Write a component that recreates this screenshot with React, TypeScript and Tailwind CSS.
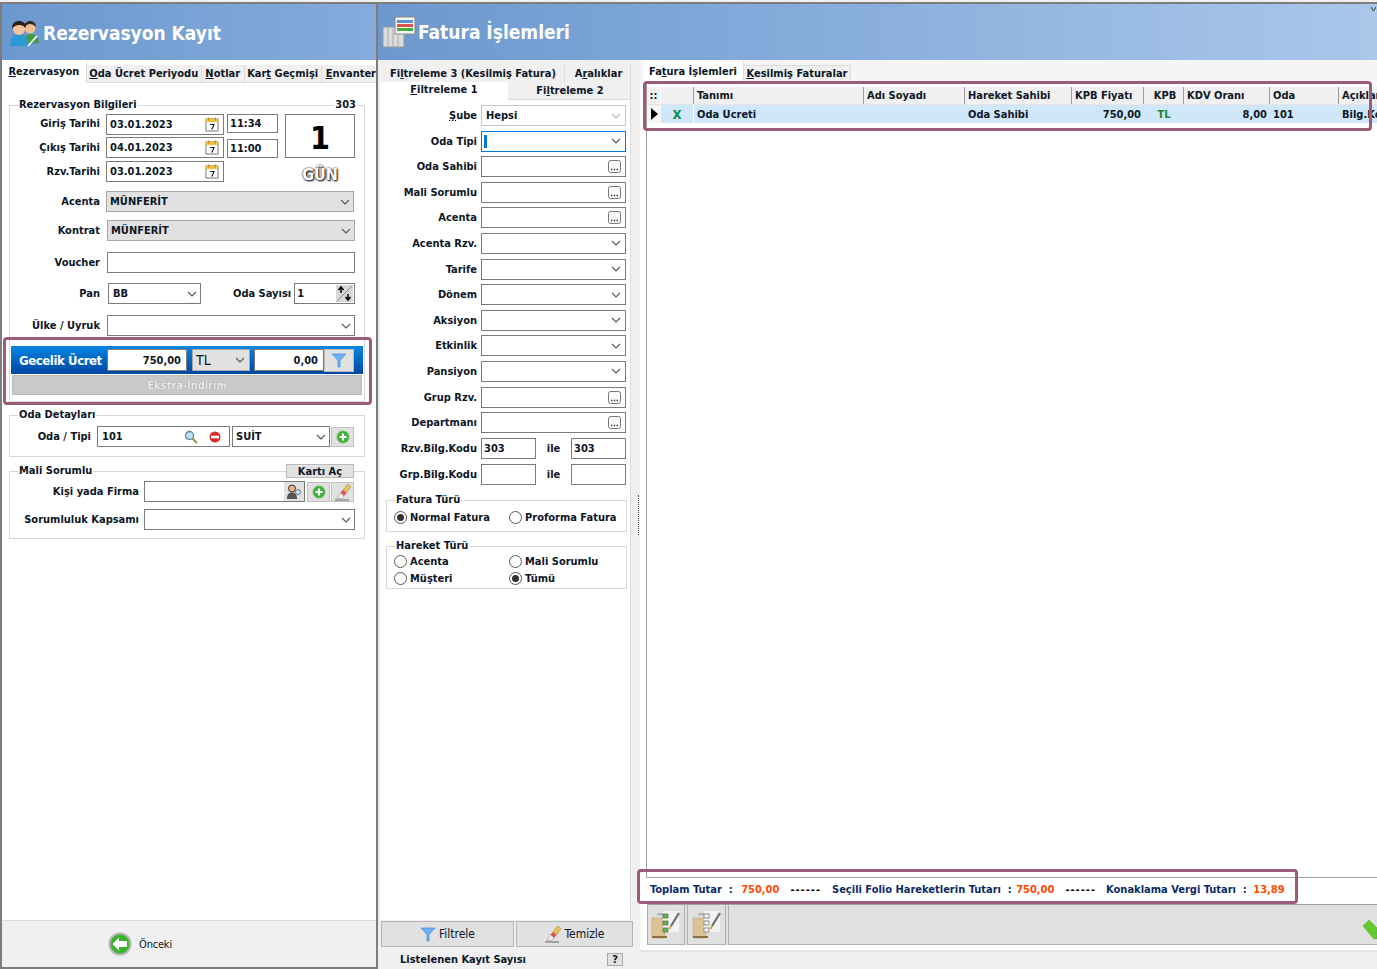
import type { ReactNode } from 'react'

function Chevron({ light }: { light?: boolean }) {
  return (
    <svg width="10" height="6" viewBox="0 0 10 6" className="shrink-0" fill="none" stroke={light ? '#b5b5b5' : '#555'} strokeWidth="1.1">
      <path d="M1 1l4 4 4-4" />
    </svg>
  )
}

function Calendar() {
  return (
    <svg width="14" height="15" viewBox="0 0 14 15" className="shrink-0">
      <rect x="1" y="2" width="12" height="12" fill="#fff" stroke="#777" />
      <rect x="1" y="2" width="12" height="3" fill="#f2c230" />
      <rect x="3" y="0.5" width="1.5" height="3" fill="#c99a10" />
      <rect x="9.5" y="0.5" width="1.5" height="3" fill="#c99a10" />
      <path d="M5 7.5h4L6.8 12.5" stroke="#222" strokeWidth="1.2" fill="none" />
    </svg>
  )
}

function Funnel({ size = 16 }: { size?: number }) {
  return (
    <svg width={size} height={size} viewBox="0 0 16 16" className="shrink-0">
      <path d="M1 2h14L9 8.500V15H7V8.500z" fill="#6db2f5" stroke="#3d8be0" strokeWidth="0.7" />
    </svg>
  )
}

function PlusIcon() {
  return (
    <svg width="14" height="14" viewBox="0 0 14 14">
      <circle cx="7" cy="7" r="6.4" fill="#3fae3a" stroke="#b8d8b5" />
      <path d="M7 3.5v7M3.5 7h7" stroke="#fff" strokeWidth="2.2" />
    </svg>
  )
}

function Brush({ size = 18 }: { size?: number }) {
  return (
    <svg width={size} height={size} viewBox="0 0 18 18">
      <path d="M9 7l4.500-6L17 3.500 12.500 10z" fill="#eabf62" stroke="#9a7a30" strokeWidth="0.5" />
      <path d="M6.500 9.500L9 7l3.500 3-2.500 3z" fill="#d9534f" />
      <path d="M6.500 9.500l3.500 3.500-2 2.500H3z" fill="#eeeeee" stroke="#888" strokeWidth="0.5" />
      <path d="M1 17h14" stroke="#666" />
    </svg>
  )
}

function Dots() {
  return (
    <svg width="13" height="13" viewBox="0 0 13 13" className="shrink-0">
      <rect x="0.500" y="0.500" width="12" height="12" rx="2" fill="#fafafa" stroke="#777" />
      <path d="M3 9.500h1.400M5.800 9.500h1.400M8.600 9.500H10" stroke="#333" strokeWidth="1.300" />
    </svg>
  )
}

function Clipboard({ checked }: { checked?: boolean }) {
  const box = checked ? '#58b83f' : '#f8f8f8'
  return (
    <svg width="30" height="29" viewBox="0 0 30 29">
      <path d="M1 8h13v20H1z" fill="#dcc394" stroke="#b59c68" strokeWidth="0.5" />
      <rect x="1" y="26" width="15" height="2" fill="#8b7040" />
      <rect x="12" y="1" width="16" height="21" fill="#f2f2f2" />
      <rect x="6" y="3" width="6" height="2.500" fill="#b5b5b5" />
      <rect x="12" y="4" width="5" height="4" fill={box} stroke="#666" strokeWidth="0.7" />
      <rect x="12" y="11" width="5" height="4" fill={box} stroke="#666" strokeWidth="0.7" />
      <rect x="12" y="18" width="5" height="4" fill={box} stroke="#666" strokeWidth="0.7" />
      <path d="M28 3L20 16" stroke="#6d6d6d" strokeWidth="2.200" />
      <path d="M20 16l-1.500 3" stroke="#c9a450" strokeWidth="2" />
    </svg>
  )
}

function Box({ className, children }: { className: string; children?: ReactNode }) {
  return <div className={`flex items-center bg-white border border-[#7a7a7a] ${className}`}>{children}</div>
}

function Label({ className, children }: { className: string; children: ReactNode }) {
  return <span className={`shrink-0 text-right whitespace-nowrap ${className}`}>{children}</span>
}

function Tab({ className, children }: { className: string; children: ReactNode }) {
  return <div className={`flex items-center justify-center whitespace-nowrap border-[#dcdcdc] ${className}`}>{children}</div>
}

function Radio({ on, children, className }: { on?: boolean; children: string; className?: string }) {
  return (
    <div className={`flex items-center gap-[3px] ${className ?? ''}`}>
      <span className="flex h-[13px] w-[13px] items-center justify-center rounded-full border border-[#555] bg-white">
        {on && <span className="h-[7px] w-[7px] rounded-full bg-[#333]" />}
      </span>
      {children}
    </div>
  )
}

type FilterKind = 'select' | 'dots'

const filters: { label: ReactNode; kind: FilterKind }[] = [
  { label: 'Oda Sahibi', kind: 'dots' },
  { label: 'Mali Sorumlu', kind: 'dots' },
  { label: 'Acenta', kind: 'dots' },
  { label: 'Acenta Rzv.', kind: 'select' },
  { label: 'Tarife', kind: 'select' },
  { label: 'Dönem', kind: 'select' },
  { label: 'Aksiyon', kind: 'select' },
  { label: 'Etkinlik', kind: 'select' },
  { label: 'Pansiyon', kind: 'select' },
  { label: 'Grup Rzv.', kind: 'dots' },
  { label: 'Departmanı', kind: 'dots' },
]

const columns = [
  { title: 'Tanımı', value: 'Oda Ücreti', cls: 'w-[170px] text-left' },
  { title: 'Adı Soyadı', value: '', cls: 'w-[101px] text-left' },
  { title: 'Hareket Sahibi', value: 'Oda Sahibi', cls: 'w-[107px] text-left' },
  { title: 'KPB Fiyatı', value: '750,00', cls: 'w-[72px] text-right', headLeft: true },
  { title: 'KPB', value: 'TL', cls: 'w-[40px] text-center text-[#1a8a2a]', headCenter: true },
  { title: 'KDV Oranı', value: '8,00', cls: 'w-[86px] text-right', headLeft: true },
  { title: 'Oda', value: '101', cls: 'w-[69px] text-left' },
  { title: 'Açıklama', value: 'Bilg.Kodu', cls: 'w-[60px] text-left' },
]

export default function App() {
  return (
    <div className="relative flex h-[969px] w-[1377px] overflow-hidden bg-[#f0f0f0] pt-[2px] font-['DejaVu_Sans_Condensed','DejaVu_Sans',sans-serif] text-[11px] font-bold leading-none text-[#0d1626]">
      {/* sol panel */}
      <div className="flex h-[967px] w-[378px] shrink-0 flex-col border-2 border-[#7d7d7d] bg-white">
        <div className="flex h-[56px] shrink-0 items-center gap-[3px] bg-gradient-to-r from-[#6b98cf] to-[#86abdc] pl-[6px] pt-[2px]">
          <svg width="32" height="27" viewBox="0 0 32 27">
            <path d="M15 24c0-7 3-10 7-10s9 2 9 9z" fill="#3f9a4c" />
            <circle cx="22" cy="8" r="5.500" fill="#f0bd95" />
            <path d="M16 8c0-5 3-7 6-7s6 2 6 6c-2-2-4-3-6-3s-4 1-6 4z" fill="#2a2a20" />
            <path d="M2 26c0-8 3-12 9-12s9 4 9 12z" fill="#2c9ad6" />
            <circle cx="11" cy="9" r="6" fill="#f4c29b" />
            <path d="M4 9c0-6 3-8 7-8s7 2 7 7c-2-2-4-3-7-3S6 6 4 9z" fill="#2b2118" />
            <path d="M20 26l9-10" stroke="#fff" strokeWidth="1.600" />
          </svg>
          <span className="text-[19px] text-white">Rezervasyon Kayıt</span>
        </div>

        <div className="flex h-[23px] shrink-0 items-end overflow-hidden bg-white">
          <Tab className="h-[22px] w-[87px] border-r bg-white"><span className="-mt-[2px]"><u>R</u>ezervasyon</span></Tab>
          <Tab className="h-[18px] w-[118px] border-r border-b bg-[#f0f0f0]"><span><u>O</u>da Ücret Periyodu</span></Tab>
          <Tab className="h-[18px] w-[44px] border-r border-b bg-[#f0f0f0]"><span><u>N</u>otlar</span></Tab>
          <Tab className="h-[18px] w-[79px] border-r border-b bg-[#f0f0f0]"><span>Kar<u>t</u> Geçmişi</span></Tab>
          <Tab className="h-[18px] flex-1 justify-start border-b bg-[#f0f0f0] pl-[4px]"><span><u>E</u>nvanter</span></Tab>
        </div>

        <div className="flex min-h-0 flex-1 flex-col pl-[7px] pt-[15px]">
          <fieldset className="relative h-[304px] w-[356px] border border-[#d8d8d8]">
            <legend className="ml-[8px] h-[14px] px-[1px] leading-[14px]">Rezervasyon Bilgileri</legend>
            <span className="absolute right-[7px] top-[-14px] bg-white px-[1px] leading-[14px]">303</span>

            <div className="mt-[2px] flex">
              <div className="flex w-[269px] flex-col gap-[2px]">
                <div className="flex h-[21px] items-start">
                  <Label className="mr-[6px] mt-[4px] w-[90px]">Giriş Tarihi</Label>
                  <Box className="h-[21px] w-[118px] justify-between pl-[3px] pr-[4px]">03.01.2023<Calendar /></Box>
                  <Box className="ml-[3px] h-[19px] w-[51px] pl-[2px]">11:34</Box>
                </div>
                <div className="flex h-[21px] items-start">
                  <Label className="mr-[6px] mt-[5px] w-[90px]">Çıkış Tarihi</Label>
                  <Box className="h-[21px] w-[118px] justify-between pl-[3px] pr-[4px]">04.01.2023<Calendar /></Box>
                  <Box className="ml-[3px] mt-[2px] h-[19px] w-[51px] pl-[2px]">11:00</Box>
                </div>
                <div className="mt-[1px] flex h-[21px] items-center">
                  <Label className="mr-[6px] w-[90px]">Rzv.Tarihi</Label>
                  <Box className="h-[21px] w-[118px] justify-between pl-[3px] pr-[4px]">03.01.2023<Calendar /></Box>
                </div>
              </div>
              <div className="ml-[6px] flex w-[70px] flex-col items-center">
                <div className="flex h-[44px] w-[70px] items-center justify-center border border-[#7a7a7a] pt-[3px] text-[32px] text-black">1</div>
                <span className="mt-[9px] text-[16px] text-white [text-shadow:0_0_2px_#000,1px_1px_2px_#000]">GÜN</span>
              </div>
            </div>

            <div className="mt-[8px] flex h-[21px] items-center">
              <Label className="mr-[6px] w-[90px]">Acenta</Label>
              <div className="flex h-[21px] w-[248px] items-center justify-between border border-[#a6a6a6] bg-[#e1e1e1] pl-[3px] pr-[3px]">MÜNFERİT<Chevron /></div>
            </div>
            <div className="mt-[8px] flex h-[21px] items-center">
              <Label className="mr-[7px] w-[90px]">Kontrat</Label>
              <div className="flex h-[21px] w-[248px] items-center justify-between border border-[#a6a6a6] bg-[#e1e1e1] pl-[3px] pr-[3px]">MÜNFERİT<Chevron /></div>
            </div>
            <div className="mt-[11px] flex h-[21px] items-center">
              <Label className="mr-[7px] w-[90px]">Voucher</Label>
              <Box className="h-[21px] w-[248px]" />
            </div>
            <div className="mt-[10px] flex h-[21px] items-center">
              <Label className="mr-[8px] w-[90px]">Pan</Label>
              <Box className="h-[21px] w-[93px] justify-between pl-[4px] pr-[3px]">BB<Chevron /></Box>
              <Label className="ml-[32px] mr-[3px]">Oda Sayısı</Label>
              <Box className="h-[21px] w-[61px] justify-between pl-[2px] pr-[1px]">
                1
                <svg width="17" height="17" viewBox="0 0 17 17">
                  <rect width="17" height="17" fill="#d8d8d8" />
                  <path d="M1 16L16 1" stroke="#888" />
                  <path d="M5 8V3M2.500 5L5 2l2.500 3M12 9v5M9.500 12l2.500 3 2.500-3" stroke="#000" strokeWidth="1.500" fill="none" />
                </svg>
              </Box>
            </div>
            <div className="mt-[11px] flex h-[21px] items-center">
              <Label className="mr-[7px] w-[90px]">Ülke / Uyruk</Label>
              <Box className="h-[21px] w-[248px] justify-end pr-[3px]"><Chevron /></Box>
            </div>

            <div className="ml-[1px] mt-[10px] flex h-[28px] w-[352px] items-center bg-gradient-to-b from-[#0b86e2] to-[#0047a3] pl-[8px]">
              <span className="w-[88px] whitespace-nowrap text-[13px] tracking-[-0.4px] text-white">Gecelik Ücret</span>
              <Box className="h-[22px] w-[80px] justify-end pr-[5px]">750,00</Box>
              <div className="ml-[5px] flex h-[22px] w-[58px] items-center justify-between border border-[#a6a6a6] bg-[#e1e1e1] pl-[3px] pr-[4px] text-[14px] font-normal">TL<Chevron /></div>
              <Box className="ml-[4px] h-[22px] w-[70px] justify-end pr-[5px]">0,00</Box>
              <div className="flex h-[23px] w-[30px] items-center justify-center border border-[#bbb] bg-[#e1e1e1]"><Funnel /></div>
            </div>
            <div className="ml-[2px] mt-[1px] flex h-[20px] w-[350px] items-center justify-center border border-[#bdbdbd] bg-[#c9c9c9] text-[#ececec] [text-shadow:0_0_1px_#777]">Ekstra-İndirim</div>
          </fieldset>

          <fieldset className="mt-[6px] h-[49px] w-[356px] border border-[#d8d8d8]">
            <legend className="ml-[8px] h-[14px] px-[1px] leading-[14px]">Oda Detayları</legend>
            <div className="mt-[4px] flex items-center">
              <Label className="mr-[6px] w-[81px]">Oda / Tipi</Label>
              <Box className="h-[21px] w-[133px] pl-[4px]">
                <span className="flex-1">101</span>
                <svg width="14" height="14" viewBox="0 0 14 14">
                  <circle cx="5.500" cy="5.500" r="4" fill="#bfe0f2" stroke="#5b8aa5" strokeWidth="1.300" />
                  <path d="M8.500 8.500L13 13" stroke="#a08850" strokeWidth="2" />
                </svg>
                <svg width="12" height="12" viewBox="0 0 12 12" className="ml-[11px] mr-[8px]">
                  <circle cx="6" cy="6" r="5.500" fill="#d92b2b" />
                  <rect x="2" y="4.700" width="8" height="2.600" fill="#fff" />
                </svg>
              </Box>
              <Box className="ml-[2px] h-[21px] w-[98px] justify-between pl-[3px] pr-[3px]">SUİT<Chevron /></Box>
              <div className="ml-[1px] flex h-[20px] w-[23px] items-center justify-center border border-[#c0c0c0] bg-[#e1e1e1]"><PlusIcon /></div>
            </div>
          </fieldset>

          <fieldset className="relative mt-[7px] h-[75px] w-[356px] border border-[#d8d8d8]">
            <legend className="ml-[8px] h-[14px] px-[1px] leading-[14px]">Mali Sorumlu</legend>
            <div className="absolute right-[10px] top-[-14px] flex h-[14px] w-[68px] items-center justify-center border border-[#bbb] bg-[#e1e1e1]">Kartı Aç</div>
            <div className="mt-[3px] flex items-center">
              <Label className="mr-[5px] w-[129px]">Kişi yada Firma</Label>
              <Box className="h-[21px] w-[161px] justify-end">
                <div className="flex h-[19px] w-[20px] items-center justify-center bg-[#e1e1e1]">
                  <svg width="16" height="16" viewBox="0 0 16 16">
                    <circle cx="6" cy="4.500" r="3.500" fill="#e8b48c" stroke="#333" />
                    <path d="M1 15c0-5 2-6.500 5-6.500s5 1.500 5 6.500z" fill="#555" />
                    <circle cx="12" cy="8" r="2.500" fill="#cfe6f5" stroke="#678" />
                  </svg>
                </div>
              </Box>
              <div className="ml-[2px] flex h-[20px] w-[23px] items-center justify-center border border-[#c0c0c0] bg-[#e1e1e1]"><PlusIcon /></div>
              <div className="ml-[1px] flex h-[20px] w-[23px] items-center justify-center border border-[#c0c0c0] bg-[#e1e1e1]"><Brush /></div>
            </div>
            <div className="mt-[7px] flex items-center">
              <Label className="mr-[5px] w-[129px]">Sorumluluk Kapsamı</Label>
              <Box className="h-[21px] w-[211px] justify-end pr-[3px]"><Chevron /></Box>
            </div>
          </fieldset>
        </div>

        <div className="flex h-[47px] shrink-0 items-center justify-center gap-[7px] border-t border-[#dcdcdc] bg-[#f0f0f0] pr-[98px] text-[11px] font-normal tracking-[-0.2px]">
          <svg width="24" height="24" viewBox="0 0 24 24">
            <circle cx="12" cy="12" r="11.500" fill="#b5b5b5" />
            <circle cx="12" cy="12" r="9.500" fill="#37b52f" />
            <path d="M11 5.500L4.500 12l6.500 6.500V15h8V9h-8z" fill="#fff" />
          </svg>
          Önceki
        </div>
      </div>

      {/* sağ panel */}
      <div className="flex h-[967px] min-w-0 flex-1 flex-col">
        <div className="flex h-[58px] shrink-0 items-center gap-[2px] border-t-2 border-[#7d7d7d] bg-gradient-to-r from-[#6b98cf] to-[#aac7ea] pl-[4px]">
          <svg width="34" height="32" viewBox="0 0 34 32">
            <path d="M1 11h21v20H1z" fill="#dcdcdc" stroke="#999" />
            <path d="M6 11v20M11 11v20M16 11v20" stroke="#aaa" />
            <rect x="13" y="1" width="20" height="17" fill="#f5f5f5" stroke="#888" />
            <rect x="15" y="4" width="16" height="3" fill="#5b8fd6" />
            <rect x="15" y="8" width="16" height="3" fill="#d9534f" />
            <rect x="15" y="12" width="16" height="3" fill="#3fae3a" />
          </svg>
          <span className="text-[19px] text-white">Fatura İşlemleri</span>
          <svg width="5" height="5" viewBox="0 0 5 5" className="mb-[46px] ml-auto mr-[1px]"><path d="M0 0l2.500 4L5 0" stroke="#333" fill="none" /></svg>
        </div>

        <div className="flex min-h-0 flex-1">
          {/* filtre kolonu */}
          <div className="flex w-[258px] shrink-0 flex-col pl-[2px]">
            <div className="mt-[4px] flex h-[18px] w-[251px] shrink-0">
              <Tab className="w-[185px] border-r bg-[#f0f0f0]"><span className="ml-[2px]">Fi<u>l</u>treleme 3 (Kesilmiş Fatura)</span></Tab>
              <Tab className="flex-1 border-r bg-[#f0f0f0]"><span className="ml-[2px]">A<u>r</u>alıklar</span></Tab>
            </div>
            <div className="flex h-[18px] w-[251px] shrink-0 bg-[#f0f0f0]">
              <Tab className="w-[128px] bg-white"><span className="-mt-[3px]"><u>F</u>iltreleme 1</span></Tab>
              <Tab className="flex-1 border-r border-b"><span className="ml-[2px]">Fi<u>l</u>treleme 2</span></Tab>
            </div>
            <div className="flex min-h-0 w-[251px] flex-1 flex-col border-r border-[#dcdcdc] bg-white">
              <div className="mt-[5px] flex flex-col gap-[4.600px] pr-[4px]">
                <div className="flex h-[21px] items-center justify-end">
                  <Label className="mr-[4px]"><u>Ş</u>ube</Label>
                  <div className="flex h-[21px] w-[145px] items-center justify-between border border-[#c8c8c8] pl-[4px] pr-[4px]">Hepsi<Chevron light /></div>
                </div>
                <div className="flex h-[21px] items-center justify-end">
                  <Label className="mr-[4px]">Oda Tipi</Label>
                  <div className="flex h-[21px] w-[145px] items-center justify-between border border-[#0078d7] pl-[2px] pr-[4px]">
                    <span className="h-[13px] w-[3px] bg-[#0078d7]" />
                    <Chevron />
                  </div>
                </div>
                {filters.map((f, i) => (
                  <div key={i} className="flex h-[21px] items-center justify-end">
                    <Label className="mr-[4px]">{f.label}</Label>
                    <Box className="h-[21px] w-[145px] justify-end pr-[4px]">{f.kind === 'select' ? <Chevron /> : <Dots />}</Box>
                  </div>
                ))}
                <div className="flex h-[21px] items-center justify-end">
                  <Label className="mr-[4px]">Rzv.Bilg.Kodu</Label>
                  <Box className="h-[21px] w-[55px] pl-[2px]">303</Box>
                  <span className="w-[35px] text-center">ile</span>
                  <Box className="h-[21px] w-[55px] pl-[2px]">303</Box>
                </div>
                <div className="mt-[1px] flex h-[21px] items-center justify-end">
                  <Label className="mr-[4px]">Grp.Bilg.Kodu</Label>
                  <Box className="h-[21px] w-[55px]" />
                  <span className="w-[35px] text-center">ile</span>
                  <Box className="h-[21px] w-[55px]" />
                </div>
              </div>

              <fieldset className="ml-[6px] mt-[8px] h-[39px] w-[241px] border border-[#d8d8d8]">
                <legend className="ml-[8px] h-[14px] px-[1px] leading-[14px]">Fatura Türü</legend>
                <div className="mt-[4px] flex pl-[7px]">
                  <Radio on className="w-[115px]">Normal Fatura</Radio>
                  <Radio>Proforma Fatura</Radio>
                </div>
              </fieldset>
              <fieldset className="ml-[6px] mt-[7px] h-[50px] w-[241px] border border-[#d8d8d8]">
                <legend className="ml-[8px] h-[14px] px-[1px] leading-[14px]">Hareket Türü</legend>
                <div className="mt-[2px] grid grid-cols-[115px_1fr] gap-y-[4px] pl-[7px]">
                  <Radio>Acenta</Radio>
                  <Radio>Mali Sorumlu</Radio>
                  <Radio>Müşteri</Radio>
                  <Radio on>Tümü</Radio>
                </div>
              </fieldset>
            </div>
            <div className="mb-[1px] flex h-[28px] w-[254px] shrink-0 items-center gap-[2px] pl-[1px] text-[12px] font-normal">
              <div className="flex h-[26px] w-[133px] items-center justify-center gap-[3px] border border-[#b5b5b5] bg-[#e1e1e1]"><Funnel />Filtrele</div>
              <div className="flex h-[26px] w-[117px] items-center justify-center gap-[2px] border border-[#b5b5b5] bg-[#e1e1e1]"><Brush />Temizle</div>
            </div>
            <div className="flex h-[20px] shrink-0 items-center pl-[20px]">
              <span className="w-[207px]">Listelenen Kayıt Sayısı</span>
              <div className="flex h-[13px] w-[16px] items-center justify-center border border-[#aaa] bg-[#e1e1e1]">?</div>
            </div>
          </div>

          {/* ayırıcı */}
          <div className="flex w-[4px] shrink-0 items-center justify-center">
            <div className="h-[40px] w-[1px] border-l border-dotted border-[#555]" />
          </div>

          {/* fatura listesi */}
          <div className="flex min-w-0 flex-1 flex-col overflow-hidden bg-white">
            <div className="flex h-[21px] shrink-0 items-end bg-[#f5f5f5] pl-[3px]">
              <Tab className="h-[20px] w-[101px] border-r bg-white"><span>Fa<u>t</u>ura İşlemleri</span></Tab>
              <Tab className="h-[16px] w-[107px] border-r border-t bg-[#f0f0f0]"><span><u>K</u>esilmiş Faturalar</span></Tab>
            </div>
            <div className="ml-[6px] flex min-h-0 flex-1 flex-col border-b border-l border-[#a0a0a0] pt-[6px]">
              <div className="flex h-[18px] shrink-0 border-b border-[#e6e6e6] bg-[#f0f0f0]">
                <div className="flex w-[14px] shrink-0 items-center justify-center border-r border-white">::</div>
                <div className="w-[33px] shrink-0 border-r border-[#9a9a9a]" />
                {columns.map((c) => (
                  <div
                    key={c.title}
                    className={`flex shrink-0 items-center overflow-hidden whitespace-nowrap border-r border-[#9a9a9a] pl-[3px] ${c.cls.split(' ')[0]} ${c.headCenter ? 'justify-center pl-0' : ''}`}
                  >
                    {c.title}
                  </div>
                ))}
              </div>
              <div className="flex h-[18px] shrink-0 bg-[#cfe6fb]">
                <div className="flex w-[14px] shrink-0 items-center justify-center bg-[#f5f5f5]">
                  <svg width="7" height="12" viewBox="0 0 7 12"><path d="M0 0l7 6-7 6z" fill="#000" /></svg>
                </div>
                <div className="flex w-[33px] shrink-0 items-center justify-center border-r border-white text-[13px] text-[#0a8a4a]">X</div>
                {columns.map((c) => (
                  <div key={c.title} className={`shrink-0 self-center overflow-hidden whitespace-nowrap px-[3px] ${c.cls}`}>
                    {c.value}
                  </div>
                ))}
              </div>
            </div>
            <div className="flex h-[26px] shrink-0 items-center pb-[4px] pl-[10px] text-[#0a2a66]">
              <span>Toplam Tutar&nbsp; :&nbsp;</span>
              <span className="ml-[5px] text-[#ff4a00]">750,00</span>
              <span className="ml-[11px] tracking-[1px] text-black">------</span>
              <span className="ml-[11px]">Seçili Folio Hareketlerin Tutarı&nbsp; :&nbsp;</span>
              <span className="ml-[1px] text-[#ff4a00]">750,00</span>
              <span className="ml-[11px] tracking-[1px] text-black">------</span>
              <span className="ml-[10px]">Konaklama Vergi Tutarı&nbsp; :&nbsp;</span>
              <span className="ml-[3px] text-[#ff4a00]">13,89</span>
            </div>
            <div className="ml-[7px] flex h-[41px] shrink-0 gap-[2px] border-t border-[#a0a0a0] bg-[#e0e0e0]">
              <div className="flex h-[40px] w-[38px] items-center justify-center border-x border-b border-[#b0b0b0]"><Clipboard checked /></div>
              <div className="flex h-[40px] w-[39px] items-center justify-center border-x border-b border-[#b0b0b0]"><Clipboard /></div>
              <div className="flex h-[40px] flex-1 items-center justify-end overflow-hidden border-l border-b border-[#b0b0b0]">
                <svg width="14" height="20" viewBox="0 0 14 20" className="mt-[9px]">
                  <path d="M0 7l6-6 8 8v11h-3z" fill="#62cb30" stroke="#4aa626" strokeWidth="0.5" />
                </svg>
              </div>
            </div>
            <div className="h-[5px] shrink-0 bg-white" />
            <div className="h-[19px] shrink-0 border-t-2 border-[#e4e4e4] bg-[#f0f0f0]" />
          </div>
        </div>
      </div>

      {/* işaretleme çerçeveleri */}
      <div className="absolute left-[3px] top-[337px] h-[68px] w-[369px] rounded-[4px] border-[3px] border-[#9c5b78]" />
      <div className="absolute left-[643px] top-[81px] h-[50px] w-[729px] rounded-[4px] border-[3px] border-[#9c5b78]" />
      <div className="absolute left-[637px] top-[869px] h-[35px] w-[661px] rounded-[4px] border-[3px] border-[#9c5b78]" />
    </div>
  )
}
